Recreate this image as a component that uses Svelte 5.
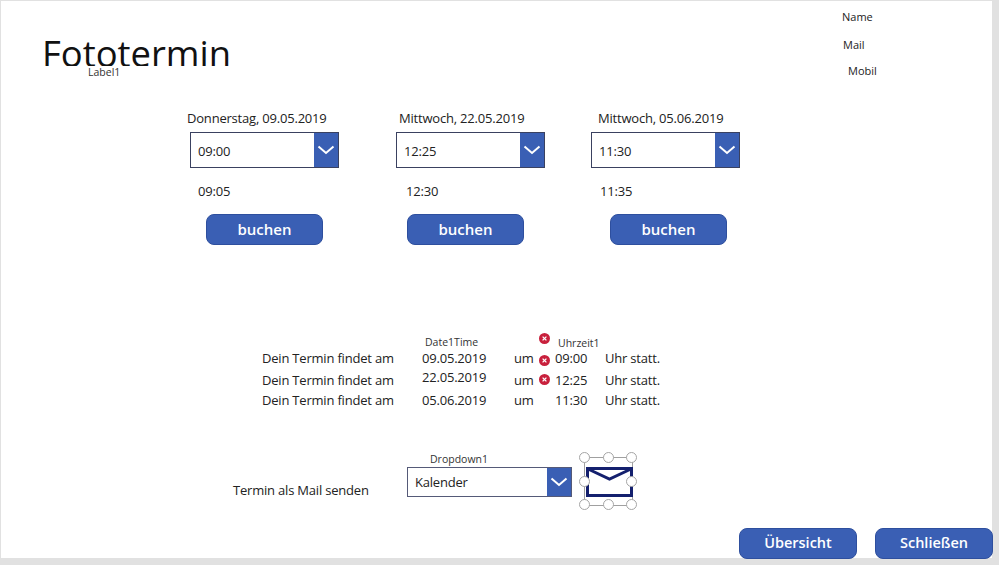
<script lang="ts">
	const slots = [
		{ cls: "s1", day: "Donnerstag, 09.05.2019", from: "09:00", to: "09:05" },
		{ cls: "s2", day: "Mittwoch, 22.05.2019", from: "12:25", to: "12:30" },
		{ cls: "s3", day: "Mittwoch, 05.06.2019", from: "11:30", to: "11:35" }
	];
	const rows = [
		{ cls: "r1", date: "09.05.2019", time: "09:00" },
		{ cls: "r2", date: "22.05.2019", time: "12:25" },
		{ cls: "r3", date: "05.06.2019", time: "11:30" }
	];
	const errors = ["e1", "e2", "e3"];
	const handles = ["h1", "h2", "h3", "h4", "h5", "h6", "h7", "h8"];
</script>

{#snippet chevron()}
	<span class="arrow">
		<svg width="18" height="10" viewBox="0 0 18 10">
			<path d="M1.5 1.5 L9 8 L16.5 1.5" fill="none" stroke="#fff" stroke-width="2" />
		</svg>
	</span>
{/snippet}

<div class="page">
	<div class="canvas">
		<header class="head">
			<div class="title-block">
				<h1 class="title">Fototermin</h1>
				<span class="label1">Label1</span>
			</div>
			<ul class="contact">
				<li class="c-name">Name</li>
				<li class="c-mail">Mail</li>
				<li class="c-mobil">Mobil</li>
			</ul>
		</header>

		<section class="slots">
			{#each slots as s}
				<div class="slot {s.cls}">
					<div class="day">{s.day}</div>
					<div class="dropdown">
						<span class="value">{s.from}</span>
						{@render chevron()}
					</div>
					<div class="end">{s.to}</div>
					<button class="btn book">buchen</button>
				</div>
			{/each}
		</section>

		<section class="summary">
			<div class="captions">
				<span class="cap-date">Date1Time</span>
				<span class="cap-time">Uhrzeit1</span>
			</div>
			{#each rows as r}
				<div class="row {r.cls}">
					<span class="txt">Dein Termin findet am</span>
					<span class="date">{r.date}</span>
					<span class="um">um</span>
					<span class="time">{r.time}</span>
					<span class="uhr">Uhr statt.</span>
				</div>
			{/each}
			{#each errors as e}
				<span class="err {e}">
					<svg width="11" height="11" viewBox="0 0 11 11">
						<circle cx="5.5" cy="5.5" r="5.5" fill="#c8203c" />
						<path d="M3.6 3.6 L7.4 7.4 M7.4 3.6 L3.6 7.4" stroke="#fff" stroke-width="1.3" />
					</svg>
				</span>
			{/each}
		</section>

		<section class="mail">
			<div class="mail-label">Termin als Mail senden</div>
			<div class="mail-drop">
				<div class="cap-drop">Dropdown1</div>
				<div class="dropdown wide">
					<span class="value">Kalender</span>
					{@render chevron()}
				</div>
			</div>
			<div class="selected">
				<svg class="env" width="47" height="30" viewBox="0 0 47 30">
					<rect x="1.5" y="1.5" width="44" height="27" fill="#fff" stroke="#14206e" stroke-width="3" />
					<path d="M2 2 L23.5 12 L45 2" fill="none" stroke="#14206e" stroke-width="3" />
				</svg>
				{#each handles as h}
					<span class="handle {h}"></span>
				{/each}
			</div>
		</section>

		<footer class="foot">
			<button class="btn nav">Übersicht</button>
			<button class="btn nav">Schließen</button>
		</footer>
	</div>
</div>

<style>
	:global(body) {
		margin: 0;
		background: #e1e1e1;
	}
	.page {
		width: 999px;
		height: 565px;
		box-sizing: border-box;
		padding: 1px 0 0 1px;
		overflow: hidden;
		font-family: "Open Sans", "Liberation Sans", sans-serif;
		color: #222;
		font-size: 13px;
		letter-spacing: -0.2px;
	}
	.canvas {
		width: 991px;
		height: 557px;
		background: #fff;
		display: flex;
		flex-direction: column;
	}

	/* header */
	.head {
		height: 95px;
		display: flex;
		justify-content: space-between;
	}
	.title-block {
		position: relative;
		margin: 30px 0 0 41px;
		height: 35px;
	}
	.title {
		margin: 0;
		height: 35px;
		overflow: hidden;
		font-size: 36.4px;
		line-height: 44px;
		font-weight: 400;
		letter-spacing: 0;
		color: #111;
		white-space: nowrap;
	}
	.label1 {
		position: absolute;
		left: 46px;
		top: 34px;
		font-size: 10.5px;
		line-height: 14px;
		letter-spacing: 0;
		color: #333;
	}
	.contact {
		list-style: none;
		margin: 0;
		padding: 8px 0 0;
		width: 150px;
		font-size: 11px;
		line-height: 15px;
		letter-spacing: 0;
		color: #222;
	}
	.c-name { margin-left: 0; }
	.c-mail { margin: 13px 0 0 1px; }
	.c-mobil { margin: 11px 0 0 6px; }

	/* slots */
	.slots {
		display: flex;
		padding-left: 189px;
		height: 150px;
	}
	.slot {
		width: 149px;
		display: flex;
		flex-direction: column;
		align-items: flex-start;
	}
	.s2 { margin-left: 57px; }
	.s3 { margin-left: 46px; }
	.day {
		height: 36px;
		line-height: 44px;
		white-space: nowrap;
		margin-left: 3px;
	}
	.s1 .day { margin-left: -3px; }
	.s3 .day { margin-left: 7px; }
	.dropdown {
		box-sizing: border-box;
		width: 149px;
		height: 36px;
		border: 1px solid #3a4160;
		display: flex;
		justify-content: space-between;
		align-items: stretch;
		background: #fff;
	}
	.value {
		padding-left: 7px;
		line-height: 36px;
	}
	.arrow {
		width: 24px;
		background: #3a5fb4;
		display: flex;
		align-items: center;
		justify-content: center;
	}
	.end {
		height: 46px;
		line-height: 46px;
		margin-left: 8px;
	}
	.s2 .end { margin-left: 10px; }
	.s3 .end { margin-left: 9px; }
	.btn {
		box-sizing: border-box;
		width: 118px;
		height: 31px;
		padding: 0 0 2px;
		border: 1px solid #2e4f9e;
		border-radius: 8px;
		background: #3a5fb4;
		color: #fff;
		font: 600 15px "Open Sans", "Liberation Sans", sans-serif;
	}
	.book { margin-left: 16px; width: 117px; }
	.s2 .book { margin-left: 11px; }
	.s3 .book { margin-left: 19px; }

	/* summary */
	.summary {
		position: relative;
		height: 108px;
		margin-top: 88px;
	}
	.captions {
		height: 14px;
		font-size: 10.5px;
		line-height: 14px;
		letter-spacing: 0;
		position: relative;
		color: #333;
	}
	.cap-date { position: absolute; left: 424px; top: 1px; }
	.cap-time { position: absolute; left: 557px; top: 2px; }
	.row {
		display: grid;
		grid-template-columns: 160px 92px 41px 50px auto;
		padding-left: 261px;
		line-height: 20px;
		height: 20px;
		white-space: nowrap;
	}
	.r2 { margin-top: 2px; }
	.r2 .date { transform: translateY(-3px); }
	.err {
		position: absolute;
		display: block;
		width: 11px;
		height: 11px;
		line-height: 0;
	}
	.e1 { left: 538px; top: -1px; }
	.e2 { left: 538px; top: 21px; }
	.e3 { left: 538px; top: 40px; }

	/* mail row */
	.mail {
		display: flex;
		align-items: flex-start;
		height: 70px;
		margin-top: 12px;
		padding-left: 232px;
	}
	.mail-label {
		width: 174px;
		margin-top: 26px;
		line-height: 20px;
		white-space: nowrap;
	}
	.mail-drop {
		width: 165px;
	}
	.cap-drop {
		height: 13px;
		font-size: 10.5px;
		line-height: 11px;
		letter-spacing: 0;
		margin-left: 23px;
		color: #333;
	}
	.dropdown.wide {
		width: 165px;
		height: 30px;
		border-color: #555a78;
	}
	.wide .value { padding-left: 7px; line-height: 28px; }
	.selected {
		position: relative;
		width: 47px;
		height: 47px;
		margin: 3px 0 0 12px;
		border: 1px solid #a0a0a0;
	}
	.env {
		position: absolute;
		left: 1px;
		top: 9px;
	}
	.handle {
		position: absolute;
		box-sizing: border-box;
		width: 11px;
		height: 11px;
		border: 1px solid #a5a5a5;
		border-radius: 50%;
		background: #fff;
		margin: -6px 0 0 -6px;
	}
	.h1 { left: 0; top: 0; }
	.h2 { left: 50%; top: 0; }
	.h3 { left: 100%; top: 0; }
	.h4 { left: 0; top: 50%; }
	.h5 { left: 100%; top: 50%; }
	.h6 { left: 0; top: 100%; }
	.h7 { left: 50%; top: 100%; }
	.h8 { left: 100%; top: 100%; }

	/* footer */
	.foot {
		display: flex;
		justify-content: flex-end;
		gap: 18px;
		margin-top: auto;
		height: 31px;
		margin-bottom: -1px;
		margin-right: -1px;
	}
	.nav { font-size: 14.5px; }
</style>
